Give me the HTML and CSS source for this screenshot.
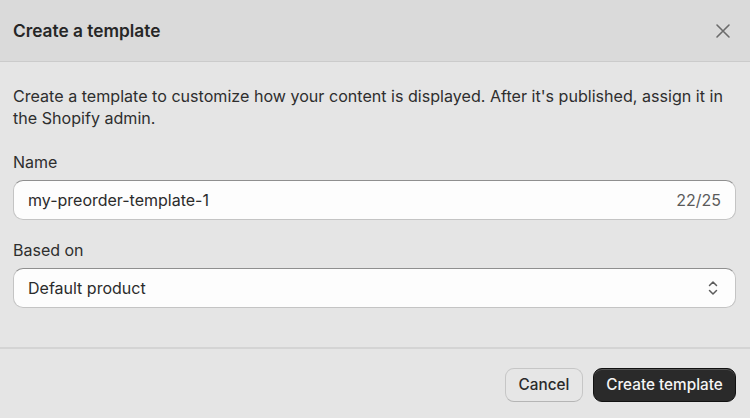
FILE: index.html
```html
<!DOCTYPE html>
<html>
<head>
<meta charset="utf-8">
<link rel="stylesheet" href="styles.css">
</head>
<body>
<div class="modal">
  <header class="head">
    <h1 class="title">Create a template</h1>
    <button class="close" aria-label="Close">
      <svg width="16" height="16" viewBox="0 0 16 16"><path d="M2 2L14 14M14 2L2 14" stroke="#6b6b6b" stroke-width="1.6" stroke-linecap="round" fill="none"/></svg>
    </button>
  </header>
  <main class="body">
    <p class="desc">Create a template to customize how your content is displayed. After it's published, assign it in the Shopify admin.</p>
    <div class="field">
      <label class="label">Name</label>
      <div class="input">
        <span class="value">my-preorder-template-1</span>
        <span class="count">22/25</span>
      </div>
    </div>
    <div class="field">
      <label class="label">Based on</label>
      <div class="input">
        <span class="value">Default product</span>
        <svg class="chev" width="12" height="18" viewBox="0 0 12 18"><path d="M2.5 6.5L6 3L9.5 6.5M2.5 11.5L6 15L9.5 11.5" stroke="#5c5c5c" stroke-width="1.5" stroke-linecap="round" stroke-linejoin="round" fill="none"/></svg>
      </div>
    </div>
  </main>
  <footer class="foot">
    <button class="btn secondary">Cancel</button>
    <button class="btn primary">Create template</button>
  </footer>
</div>
</body>
</html>
```
FILE: styles.css
```css
* { box-sizing: border-box; }
html, body { margin: 0; padding: 0; }
body {
  width: 750px;
  height: 418px;
  background: #e5e5e5;
  font-family: Inter, "Noto Sans", sans-serif;
  color: #2b2b2b;
  overflow: hidden;
}
.modal { display: flex; flex-direction: column; height: 418px; }
.head {
  height: 62px;
  flex: none;
  background: #dadada;
  border-bottom: 1px solid #cbcbcb;
  display: flex;
  align-items: center;
  justify-content: space-between;
  padding: 0 19px 0 13px;
}
.title { margin: 0; font-size: 17.3px; font-weight: 600; color: #262626; }
.close { background: none; border: 0; padding: 0; display: flex; cursor: pointer; }
.body { padding: 23px 14px 0 13px; flex: 1; }
.desc { margin: 0 0 23px; font-size: 16.1px; line-height: 22px; color: #2e2e2e; }
.field { margin-bottom: 20px; }
.label { display: block; font-size: 16px; line-height: 20px; margin-bottom: 8px; color: #2e2e2e; }
.input {
  height: 40px;
  background: #fdfdfd;
  border: 1px solid #c4c4c4;
  border-top-color: #8f8f8f;
  border-radius: 10px;
  display: flex;
  align-items: center;
  justify-content: space-between;
  padding: 0 14px 0 14px;
  font-size: 16px;
}
.value { color: #2b2b2b; }
.count { color: #5a5a5a; }
.chev { margin-right: 2px; }
.foot {
  height: 71px;
  flex: none;
  border-top: 2px solid #d4d4d4;
  display: flex;
  justify-content: flex-end;
  align-items: center;
  gap: 10px;
  padding: 2px 14px 0 0;
}
.btn {
  height: 34px;
  border-radius: 9px;
  font-family: Inter, "Noto Sans", sans-serif;
  font-size: 15.3px;
  font-weight: 550;
  padding: 0;
  white-space: nowrap;
}
.secondary {
  background: #e6e6e6;
  border: 1px solid #c6c6c6;
  border-bottom-color: #b5b5b5;
  color: #2a2a2a;
  width: 78px;
}
.primary {
  background: #2a2a2a;
  border: 1px solid #111;
  color: #f5f5f5;
  width: 143px;
  box-shadow: inset 0 1px 0 #555;
}
```
